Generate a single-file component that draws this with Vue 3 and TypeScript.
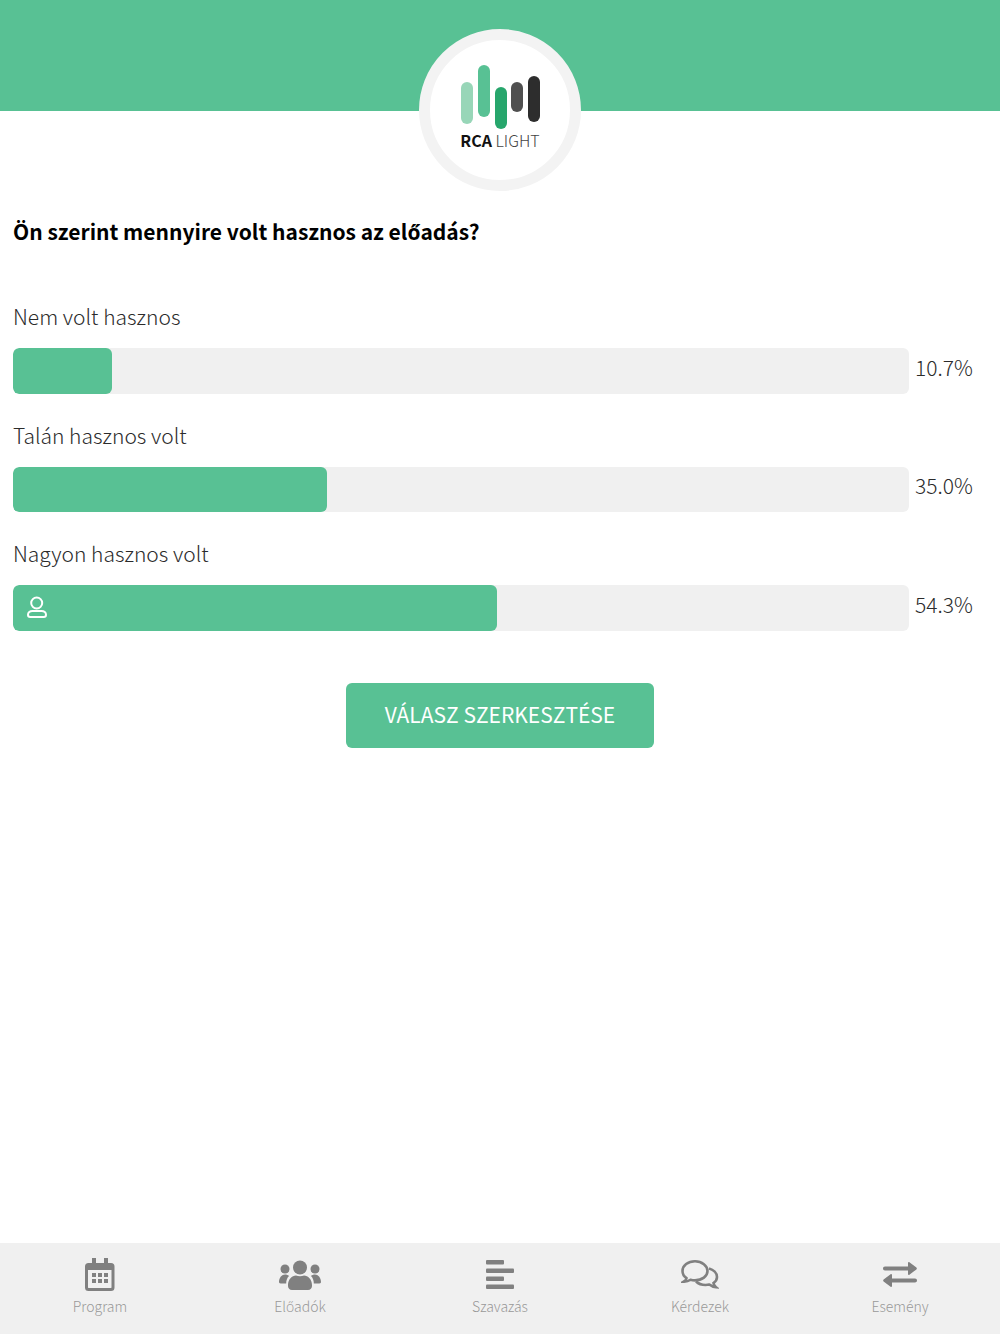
<script setup lang="ts">
interface Row { label: string; pct: number; text: string; mine?: boolean }
const rows: Row[] = [
  { label: 'Nem volt hasznos', pct: 11, text: '10.7%' },
  { label: 'Talán hasznos volt', pct: 35, text: '35.0%' },
  { label: 'Nagyon hasznos volt', pct: 54, text: '54.3%', mine: true },
]
</script>

<template>
  <div class="page">
    <header class="top">
      <div class="logo">
        <svg class="bars" width="80" height="64" viewBox="0 0 80 64">
          <rect x="0" y="17" width="12" height="42" rx="6" fill="#98d6b8" />
          <rect x="17" y="0" width="12" height="52" rx="6" fill="#58c194" />
          <rect x="34" y="22" width="12" height="42" rx="6" fill="#27a66c" />
          <rect x="50" y="17" width="12" height="30" rx="6" fill="#505050" />
          <rect x="67" y="11" width="12" height="46" rx="6" fill="#2d2d2d" />
        </svg>
        <div class="logo-text"><b>RCA</b> LIGHT</div>
      </div>
    </header>

    <main class="content">
      <h1 class="question">Ön szerint mennyire volt hasznos az előadás?</h1>
      <div class="rows">
        <div v-for="r in rows" :key="r.label" class="row">
          <div class="label">{{ r.label }}</div>
          <div class="bar-line">
            <div class="track">
              <div class="fill" :style="{ width: r.pct + '%' }">
                <svg v-if="r.mine" class="me" width="22" height="24" viewBox="0 0 22 24" fill="none" stroke="#fff" stroke-width="2">
                  <circle cx="10.700" cy="7" r="5.500" />
                  <path d="M6.500 15h9c2.700 0 4.500 1.700 4.500 3.800 0 1.400-.8 2.200-2.200 2.200H4.200C2.800 21 2 20.200 2 18.800 2 16.700 3.800 15 6.500 15z" />
                </svg>
              </div>
            </div>
            <div class="pct">{{ r.text }}</div>
          </div>
        </div>
      </div>
      <div class="actions">
        <button class="edit">VÁLASZ SZERKESZTÉSE</button>
      </div>
    </main>

    <nav class="nav">
      <div class="tab">
        <svg width="30" height="34" viewBox="0 0 30 34" fill="#808080">
          <path fill-rule="evenodd" d="M7 0h4v5h8V0h4v5h3A3.500 3.500 0 0 1 29.500 8.500v21a3.500 3.500 0 0 1-3.500 3.500H3.500A3.500 3.500 0 0 1 0 29.500v-21A3.500 3.500 0 0 1 3.500 5H7zM3 12v17.500c0 .3.200.5.500.5H26c.3 0 .5-.2.500-.5V12z" />
          <rect x="7" y="15" width="4" height="4" /><rect x="13" y="15" width="4" height="4" /><rect x="19" y="15" width="4" height="4" />
          <rect x="7" y="21" width="4" height="4" /><rect x="13" y="21" width="4" height="4" /><rect x="19" y="21" width="4" height="4" />
        </svg>
        <span>Program</span>
      </div>
      <div class="tab">
        <svg width="42" height="30" viewBox="0 0 42 30" fill="#808080">
          <circle cx="21" cy="7.500" r="7" /><circle cx="6" cy="9" r="4.500" /><circle cx="36" cy="9" r="4.500" />
          <path d="M0 22c0-4.500 3-7.500 6-7.500 1.600 0 3 .5 4 1.500-2 2-2.800 4.500-2.800 7.500H3c-2 0-3-.5-3-1.500zM42 22c0-4.500-3-7.500-6-7.500-1.600 0-3 .5-4 1.500 2 2 2.800 4.500 2.800 7.500H39c2 0 3-.5 3-1.500zM9 25c0-5.500 4-9.500 8-9.500 2.500 1 5.500 1 8 0 4 0 8 4 8 9.500v1c0 2.200-1.500 4-4 4H13c-2.500 0-4-1.800-4-4z" />
        </svg>
        <span>Előadók</span>
      </div>
      <div class="tab">
        <svg width="30" height="30" viewBox="0 0 30 30" fill="#808080">
          <rect x="1" y="0" width="18" height="4.500" rx="1" /><rect x="1" y="8.500" width="28" height="4.500" rx="1" />
          <rect x="1" y="16.500" width="18" height="4.500" rx="1" /><rect x="1" y="24.500" width="28" height="4.500" rx="1" />
        </svg>
        <span>Szavazás</span>
      </div>
      <div class="tab">
        <svg width="38" height="30" viewBox="0 0 38 30" fill="none" stroke="#808080" stroke-width="2.600">
          <path d="M14 1.300C7 1.300 1.500 5.500 1.500 11c0 3 1.500 5.500 4 7.200-.3 1.300-1.200 2.500-2.800 3.500 2.600.1 5-.6 6.800-1.900 1.400.4 2.900.6 4.500.6 7 0 12.500-4.200 12.500-9.400S21 1.300 14 1.300z" />
          <path d="M28 8.500c4.500 1.200 8 4.500 8 8.500 0 2.500-1.300 4.500-3.500 6 .2 1.600 1 3 2.500 4.200-2.800-.2-5-1.200-6.700-2.600-1.200.3-2.500.4-3.800.4-3.800 0-7.200-1.300-9.500-3.500" />
        </svg>
        <span>Kérdezek</span>
      </div>
      <div class="tab">
        <svg width="34" height="28" viewBox="0 0 34 28" fill="#808080">
          <path d="M2 5.500h23V2c0-.9.8-1.200 1.400-.7l7 5.300c.6.500.6 1.300 0 1.800l-7 5.300c-.6.500-1.400.2-1.400-.7V9.500H2c-1.200 0-2-.8-2-2s.8-2 2-2z" />
          <path d="M32 17.500H9V14c0-.9-.8-1.200-1.400-.7l-7 5.300c-.6.500-.6 1.300 0 1.800l7 5.300c.6.500 1.400.2 1.400-.7V21.500h23c1.200 0 2-.8 2-2s-.8-2-2-2z" />
        </svg>
        <span>Esemény</span>
      </div>
    </nav>
  </div>
</template>

<style>
html, body { margin: 0; background: #fff; }
</style>

<style scoped>
.page {
  height: 1334px;
  display: flex;
  flex-direction: column;
  font-family: "Noto Sans CJK SC", "Source Sans Pro", "Open Sans", sans-serif;
  font-weight: 300;
  color: #2b2b2b;
}
.top {
  height: 111px;
  flex: none;
  background: #58c194;
  position: relative;
}
.logo {
  position: absolute;
  left: 419px;
  top: 29px;
  width: 162px;
  height: 162px;
  box-sizing: border-box;
  border: 11px solid #f3f3f3;
  border-radius: 50%;
  background: #fff;
  display: flex;
  flex-direction: column;
  align-items: center;
}
.bars { margin-top: 25px; margin-left: 1px; flex: none; }
.logo-text {
  font-size: 16px;
  line-height: 20px;
  color: #444;
  margin-top: 1px;
  white-space: nowrap;
}
.logo-text b { font-weight: 700; color: #111; }
.content {
  flex: 1;
  padding: 0 13px;
}
.question {
  margin: 103px 0 0;
  font-size: 21px;
  line-height: 34px;
  font-weight: 700;
  color: #000;
}
.rows {
  margin-top: 52px;
  display: flex;
  flex-direction: column;
  gap: 25px;
}
.label {
  font-size: 21px;
  line-height: 33px;
  height: 48px;
}
.bar-line {
  display: flex;
  align-items: center;
}
.track {
  width: 896px;
  height: 45.500px;
  background: #f0f0f0;
  border-radius: 6px;
  overflow: hidden;
}
.fill {
  height: 100%;
  background: #58c194;
  border-radius: 6px;
  display: flex;
  align-items: center;
}
.me { margin-left: 13px; }
.pct {
  margin-left: 6px;
  padding-bottom: 8px;
  font-size: 21px;
  line-height: 36px;
}
.actions {
  display: flex;
  justify-content: center;
  margin-top: 52.500px;
}
.edit {
  width: 308px;
  height: 65px;
  border: none;
  border-radius: 6px;
  background: #58c194;
  color: #fff;
  font-family: inherit;
  font-weight: 400;
  font-size: 21px;
  padding: 0 0 4px;
}
.nav {
  flex: none;
  height: 91px;
  background: #f0f0f0;
  display: grid;
  grid-template-columns: repeat(5, 1fr);
}
.tab {
  display: flex;
  flex-direction: column;
  align-items: center;
  padding-top: 15px;
  height: 76px;
  position: relative;
}
.tab svg { height: 34px; flex: none; }
.tab span {
  position: absolute;
  top: 51px;
  font-size: 14px;
  line-height: 24px;
  color: #999;
}
</style>
